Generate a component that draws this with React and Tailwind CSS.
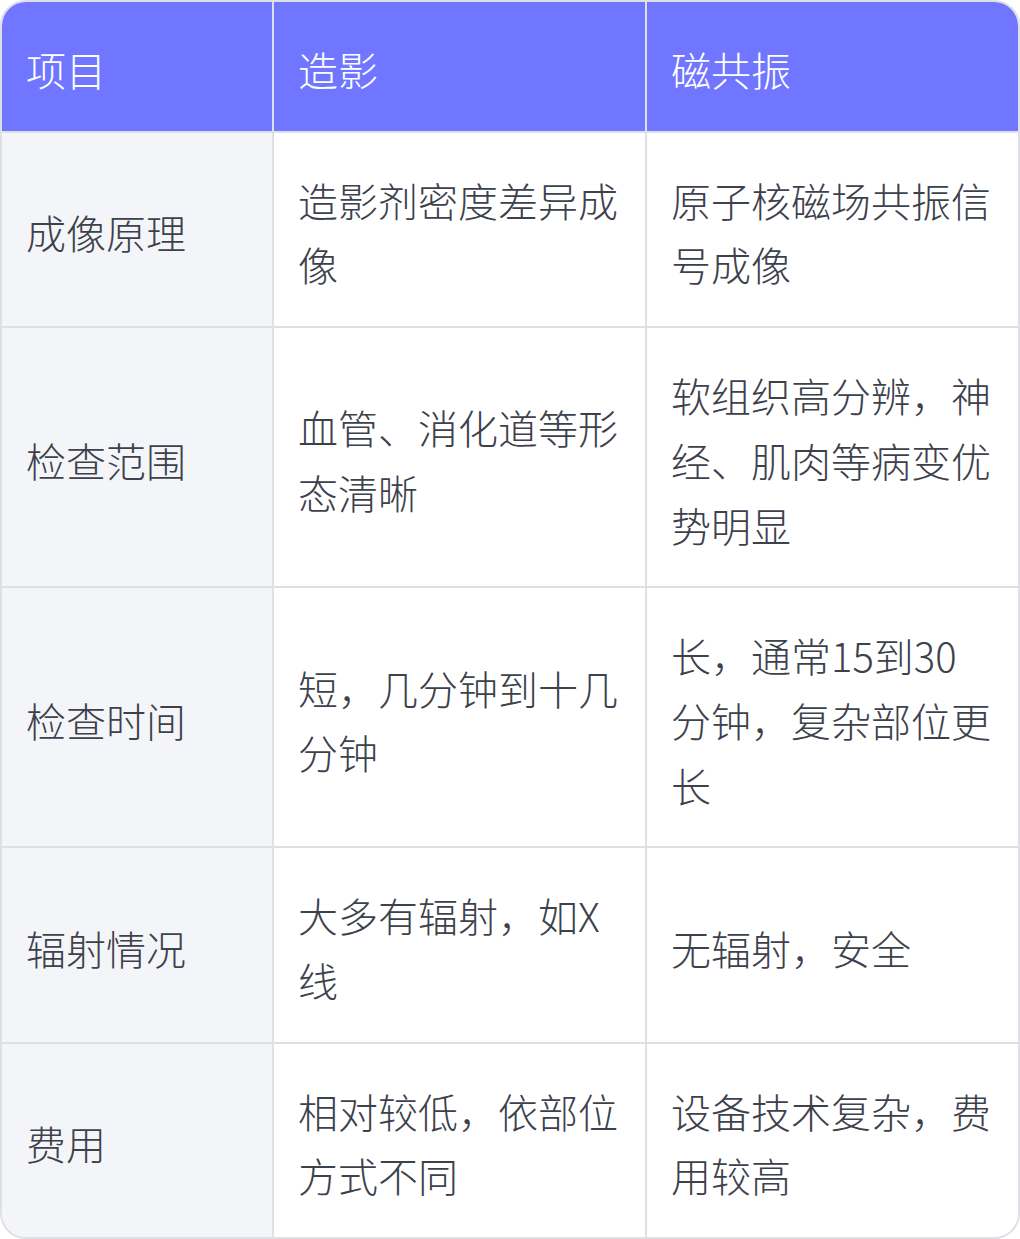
import React from "react";

const rows = [
  ["成像原理", "造影剂密度差异成像", "原子核磁场共振信号成像"],
  ["检查范围", "血管、消化道等形态清晰", "软组织高分辨，神经、肌肉等病变优势明显"],
  ["检查时间", "短，几分钟到十几分钟", "长，通常15到30分钟，复杂部位更长"],
  ["辐射情况", "大多有辐射，如X线", "无辐射，安全"],
  ["费用", "相对较低，依部位方式不同", "设备技术复杂，费用较高"],
];

export default function App() {
  return (
    <div
      className="w-[1020px] bg-white font-light"
      style={{ fontFamily: '"Noto Sans CJK SC", "Noto Sans", sans-serif' }}
    >
      <div className="border-2 border-[#dfe0e5] rounded-[26px] overflow-hidden">
        <div className="grid grid-cols-[272px_373px_1fr] text-[40px] leading-[64.7px]">
          <div className="bg-[#7076ff] text-white px-6 pt-[35px] pb-[29px] border-r-2 border-b-2 border-[#dfe0e5] flex items-center">项目</div>
          <div className="bg-[#7076ff] text-white px-6 pt-[35px] pb-[29px] border-r-2 border-b-2 border-[#dfe0e5] flex items-center">造影</div>
          <div className="bg-[#7076ff] text-white px-6 pt-[35px] pb-[29px] border-b-2 border-[#dfe0e5] flex items-center">磁共振</div>
          {rows.map((r, i) => {
            const last = i === rows.length - 1;
            return (
              <React.Fragment key={i}>
                <div className={`bg-[#f4f5f9] text-[#3d414c] px-6 pt-[35px] pb-[29px] border-r-2 border-[#dfe0e5] flex items-center ${last ? "" : "border-b-2"}`}>
                  {r[0]}
                </div>
                <div className={`bg-white text-[#3d414c] px-6 pt-[35px] pb-[29px] border-r-2 border-[#dfe0e5] flex items-center ${last ? "" : "border-b-2"}`}>
                  <span>{r[1]}</span>
                </div>
                <div className={`bg-white text-[#3d414c] px-6 pt-[35px] pb-[29px] border-[#dfe0e5] flex items-center ${last ? "" : "border-b-2"}`}>
                  <span>{r[2]}</span>
                </div>
              </React.Fragment>
            );
          })}
        </div>
      </div>
    </div>
  );
}
